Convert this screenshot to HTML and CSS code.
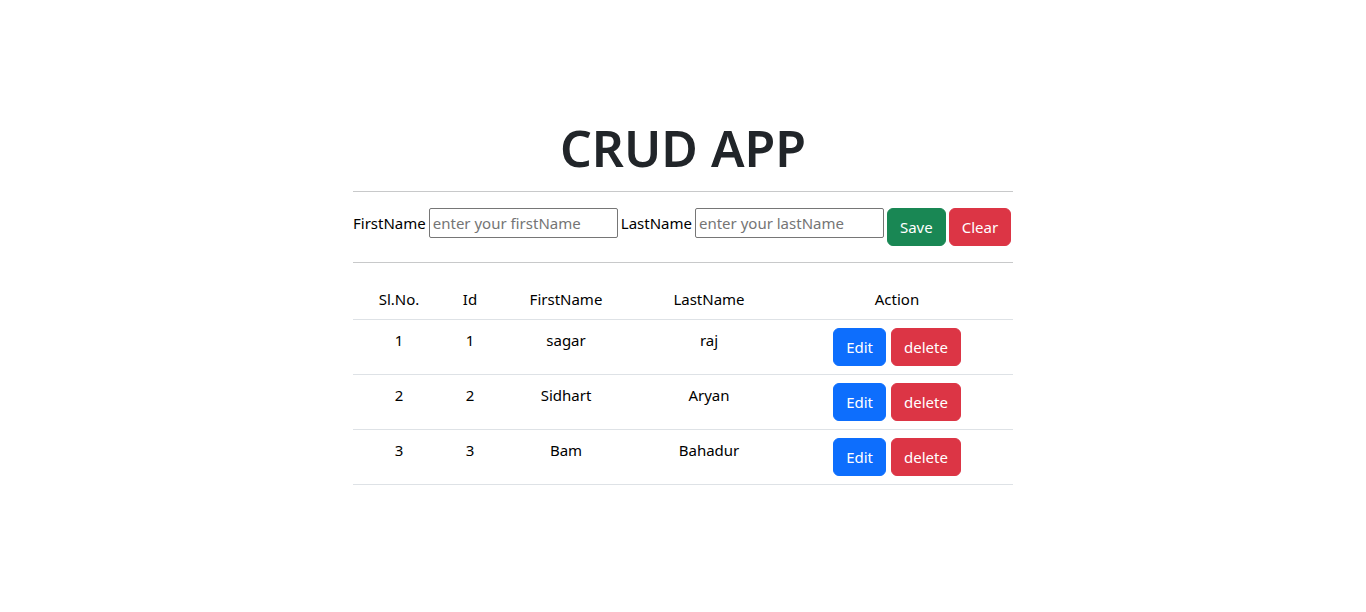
FILE: index.html
```html
<!DOCTYPE html>
<html lang="en">
<head>
<meta charset="utf-8">
<title>CRUD APP</title>
<link rel="stylesheet" href="styles.css">
</head>
<body>
<div class="container">
  <h1 class="title">CRUD APP</h1>
  <hr class="rule rule-top">
  <form class="entry">
    <label class="lbl" for="fn">FirstName</label>
    <input id="fn" class="field" type="text" placeholder="enter your firstName">
    <label class="lbl" for="ln">LastName</label>
    <input id="ln" class="field" type="text" placeholder="enter your lastName">
    <button type="button" class="btn btn-save">Save</button>
    <button type="button" class="btn btn-clear">Clear</button>
  </form>
  <hr class="rule rule-bottom">
  <table class="grid">
    <thead>
      <tr>
        <th class="c-sl">Sl.No.</th>
        <th class="c-id">Id</th>
        <th class="c-fn">FirstName</th>
        <th class="c-ln">LastName</th>
        <th class="c-act">Action</th>
      </tr>
    </thead>
    <tbody>
      <tr>
        <td>1</td><td>1</td><td>sagar</td><td>raj</td>
        <td><div class="acts"><button class="btn btn-edit">Edit</button><button class="btn btn-del">delete</button></div></td>
      </tr>
      <tr>
        <td>2</td><td>2</td><td>Sidhart</td><td>Aryan</td>
        <td><div class="acts"><button class="btn btn-edit">Edit</button><button class="btn btn-del">delete</button></div></td>
      </tr>
      <tr>
        <td>3</td><td>3</td><td>Bam</td><td>Bahadur</td>
        <td><div class="acts"><button class="btn btn-edit">Edit</button><button class="btn btn-del">delete</button></div></td>
      </tr>
    </tbody>
  </table>
</div>
</body>
</html>
```
FILE: styles.css
```css
* { box-sizing: border-box; }
html, body { margin: 0; padding: 0; background: #fff; }
body {
  font-family: "Noto Sans", "Open Sans", sans-serif;
  font-size: 15px;
  line-height: 24px;
  color: #000;
}
.container {
  width: 660px;
  margin: 0 auto;
  padding-top: 117px;
}
.title {
  margin: 0;
  text-align: center;
  font-size: 50px;
  line-height: 62px;
  font-weight: 600;
  color: #212529;
}
.rule {
  border: 0;
  border-top: 1px solid #c8c9ca;
  height: 0;
  margin: 0;
}
.rule-top { margin-top: 12px; }
.rule-bottom { margin-top: 16px; }
.entry {
  display: flex;
  align-items: flex-start;
  gap: 3px;
  margin-top: 16px;
}
.lbl {
  line-height: 30px;
  white-space: nowrap;
}
.field {
  width: 189px;
  height: 30px;
  border: 1px solid #767676;
  border-radius: 2px;
  padding: 1px 3px;
  font: inherit;
  font-size: 15px;
  color: #000;
}
.field::placeholder { color: #757575; }
.btn {
  font: inherit;
  font-size: 15px;
  line-height: 24px;
  padding: 6px 12px;
  border: 1px solid transparent;
  border-radius: 6px;
  color: #fff;
  cursor: pointer;
}
.btn-save { background: #198754; border-color: #198754; }
.btn-clear { background: #dc3545; border-color: #dc3545; }
.btn-edit { background: #0d6efd; border-color: #0d6efd; }
.btn-del { background: #dc3545; border-color: #dc3545; }
.grid {
  width: 660px;
  margin-top: 16px;
  border-collapse: collapse;
  table-layout: fixed;
}
.grid th, .grid td {
  padding: 8px;
  text-align: center;
  vertical-align: top;
  font-weight: 400;
  border-bottom: 1px solid #dee2e6;
}
.c-sl { width: 92px; }
.c-id { width: 50px; }
.c-fn { width: 142px; }
.c-ln { width: 144px; }
.c-act { width: 232px; }
.acts {
  display: flex;
  justify-content: center;
  gap: 5px;
}
```
